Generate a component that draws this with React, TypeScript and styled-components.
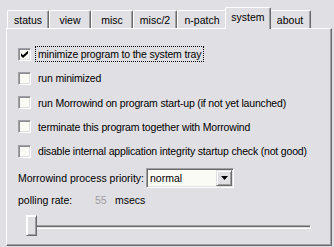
import React from 'react';
import styled, { createGlobalStyle } from 'styled-components';

const face = '#e0dfe3';
const light = '#ffffff';
const shadow = '#a0a0a4';
const dark = '#6a6a6a';
const field = '#fbfbf6';

const GlobalStyle = createGlobalStyle`
  body {
    margin: 0;
    background: ${face};
    font-family: "Liberation Sans", Arial, sans-serif;
    font-size: 10.5px;
    color: #000;
  }
`;

const Window = styled.div`
  width: 334px;
  height: 247px;
  overflow: hidden;
  background: ${face};
`;

const TabBar = styled.div`
  display: flex;
  align-items: flex-end;
  height: 28px;
  padding-left: 7px;
  box-sizing: border-box;
`;

const Tab = styled.div<{ $w: number; $active?: boolean }>`
  position: relative;
  z-index: ${(p) => (p.$active ? 3 : 1)};
  box-sizing: border-box;
  width: ${(p) => p.$w}px;
  height: ${(p) => (p.$active ? 22 : 18)}px;
  margin: 0 ${(p) => (p.$active ? -2 : 0)}px ${(p) => (p.$active ? -1 : 0)}px;
  padding-bottom: ${(p) => (p.$active ? 3 : 0)}px;
  display: flex;
  align-items: center;
  justify-content: center;
  background: ${face};
  border-top: 1px solid ${light};
  border-left: 1px solid ${light};
  border-right: 1px solid ${dark};
  box-shadow: inset -1px 0 0 ${shadow};
  border-radius: 2px 2px 0 0;
  white-space: nowrap;
`;

const Panel = styled.div`
  position: relative;
  z-index: 2;
  box-sizing: border-box;
  margin-left: 6px;
  width: 326px;
  height: 218px;
  padding: 17px 0 0 11px;
  border-top: 1px solid ${light};
  border-left: 1px solid ${light};
  border-right: 1px solid ${dark};
  border-bottom: 1px solid ${dark};
  box-shadow: inset -1px -1px 0 ${shadow};
`;

const CheckList = styled.div`
  display: flex;
  flex-direction: column;
  gap: 8.3px;
`;

const CheckRow = styled.div`
  display: flex;
  align-items: center;
  height: 16px;
  gap: 4px;
`;

const Box = styled.div`
  box-sizing: border-box;
  width: 13px;
  height: 13px;
  flex: none;
  display: flex;
  align-items: center;
  justify-content: center;
  background: ${field};
  border-top: 1px solid ${shadow};
  border-left: 1px solid ${shadow};
  border-right: 1px solid ${light};
  border-bottom: 1px solid ${light};
  box-shadow: inset 1px 1px 0 #8a8a8e, inset -1px -1px 0 ${face};
`;

const CheckLabel = styled.span<{ $focus?: boolean }>`
  box-sizing: border-box;
  height: 16px;
  display: flex;
  align-items: center;
  padding: 0 2px;
  letter-spacing: -0.17px;
  border: 1px dotted ${(p) => (p.$focus ? '#000' : 'transparent')};
  white-space: nowrap;
`;

const FieldRow = styled.div<{ $h: number; $mt: number }>`
  display: flex;
  align-items: center;
  height: ${(p) => p.$h}px;
  margin-top: ${(p) => p.$mt}px;
  white-space: nowrap;
`;

const Label = styled.span<{ $w: number; $muted?: boolean }>`
  width: ${(p) => p.$w}px;
  flex: none;
  color: ${(p) => (p.$muted ? '#9d9da1' : '#000')};
`;

const Combo = styled.div`
  box-sizing: border-box;
  width: 88px;
  height: 20px;
  display: flex;
  align-items: center;
  justify-content: space-between;
  padding: 0 1px 0 3px;
  background: ${field};
  border-top: 1px solid ${shadow};
  border-left: 1px solid ${shadow};
  border-right: 1px solid ${light};
  border-bottom: 1px solid ${light};
  box-shadow: inset 1px 1px 0 ${dark}, inset -1px -1px 0 ${face};
`;

const DropButton = styled.div`
  box-sizing: border-box;
  width: 16px;
  height: 16px;
  display: flex;
  align-items: center;
  justify-content: center;
  background: ${face};
  border-top: 1px solid ${face};
  border-left: 1px solid ${face};
  border-right: 1px solid ${dark};
  border-bottom: 1px solid ${dark};
  box-shadow: inset 1px 1px 0 ${light}, inset -1px -1px 0 ${shadow};
`;

const Slider = styled.div`
  position: relative;
  width: 285px;
  height: 21px;
  margin: 7px 0 0 8px;
`;

const Track = styled.div`
  position: absolute;
  left: 4px;
  right: 0;
  top: 10px;
  height: 4px;
  box-sizing: border-box;
  border-top: 1px solid ${shadow};
  border-left: 1px solid ${shadow};
  border-right: 1px solid ${light};
  border-bottom: 1px solid ${light};
  box-shadow: inset 1px 1px 0 ${dark};
`;

const Thumb = styled.div`
  position: absolute;
  left: 0;
  top: 0;
  box-sizing: border-box;
  width: 11px;
  height: 21px;
  background: ${face};
  border-top: 1px solid ${light};
  border-left: 1px solid ${light};
  border-right: 1px solid ${dark};
  border-bottom: 1px solid ${dark};
  box-shadow: inset 1px 1px 0 ${light}, inset -1px -1px 0 ${shadow};
`;

const tabs = [
  { label: 'status', w: 42 },
  { label: 'view', w: 42 },
  { label: 'misc', w: 42 },
  { label: 'misc/2', w: 44 },
  { label: 'n-patch', w: 50 },
  { label: 'system', w: 46, active: true },
  { label: 'about', w: 42 },
];

const options = [
  { label: 'minimize program to the system tray', checked: true, focus: true },
  { label: 'run minimized' },
  { label: 'run Morrowind on program start-up (if not yet launched)' },
  { label: 'terminate this program together with Morrowind' },
  { label: 'disable internal application integrity startup check (not good)' },
];

const CheckMark = () => (
  <svg width="7" height="7" viewBox="0 0 7 7">
    <path d="M0 2.2 L2 4.2 L7 -0.3 L7 2.4 L2 6.9 L0 4.9 Z" fill="#000" />
  </svg>
);

const Arrow = () => (
  <svg width="7" height="4" viewBox="0 0 7 4">
    <polygon points="0,0 7,0 3.5,4" fill="#000" />
  </svg>
);

export default function App() {
  return (
    <Window>
      <GlobalStyle />
      <TabBar>
        {tabs.map((t) => (
          <Tab key={t.label} $w={t.w} $active={t.active}>
            {t.label}
          </Tab>
        ))}
      </TabBar>
      <Panel>
        <CheckList>
          {options.map((o) => (
            <CheckRow key={o.label}>
              <Box>{o.checked && <CheckMark />}</Box>
              <CheckLabel $focus={o.focus}>{o.label}</CheckLabel>
            </CheckRow>
          ))}
        </CheckList>
        <FieldRow $h={20} $mt={9}>
          <Label $w={128}>Morrowind process priority:</Label>
          <Combo>
            <span>normal</span>
            <DropButton>
              <Arrow />
            </DropButton>
          </Combo>
        </FieldRow>
        <FieldRow $h={16} $mt={4}>
          <Label $w={77}>polling rate:</Label>
          <Label $w={20} $muted>
            55
          </Label>
          <Label $w={60}>msecs</Label>
        </FieldRow>
        <Slider>
          <Track />
          <Thumb />
        </Slider>
      </Panel>
    </Window>
  );
}
